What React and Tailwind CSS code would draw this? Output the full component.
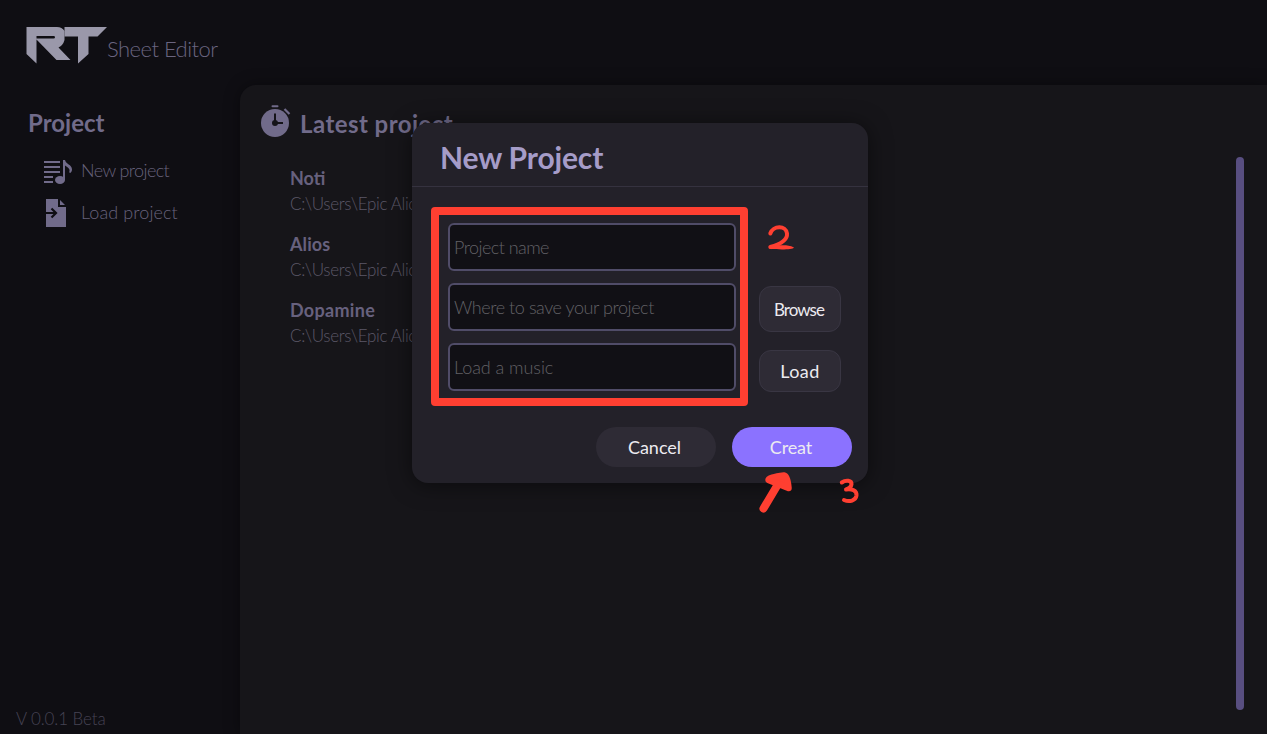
const projects = [
  { name: "Noti", track: "" },
  { name: "Alios", track: "tracking-[0.1px]" },
  { name: "Dopamine", track: "tracking-[0.3px]" },
];

function Logo() {
  return (
    <svg className="h-[38px] w-[82px] shrink-0" viewBox="0 0 82 38" fill="#9a98aa">
      <path
        fillRule="evenodd"
        d="M.5 1H31Q36 1 38.500 5V14Q37 19.500 32.500 21.500L44.500 34H30.500L10.500 13.500V37.500L.5 28ZM10.500 10V12.500H27.500Q29 12.500 29 11.200T27.500 10Z"
      />
      <path d="M38.500 1H81L71.500 10.500H62.500V28L52 37.500V10.500H38.500Z" />
    </svg>
  );
}

function PlaylistIcon() {
  return (
    <svg className="h-7 w-7 shrink-0" viewBox="0 0 28 28" fill="#716b8a">
      <path d="M0 3h16v2H0zM0 8h16v2H0zM0 13h16v2H0zM0 18h9v2H0zM0 23h9v2H0z" />
      <ellipse cx="16" cy="22" rx="5" ry="4" />
      <path d="M19 2h2c.5 4 7 4.500 7 9.500 0 1.500-.6 2.500-1.700 3.500l-1.200-.8c1.600-3-1-4.700-4.100-6.700V22h-2Z" />
    </svg>
  );
}

function FileIcon() {
  return (
    <svg className="h-7 w-7 shrink-0" viewBox="0 0 28 28">
      <path d="M2 0h12v8h8v20H2Z" fill="#716b8a" />
      <path d="M16 1v5h5Z" fill="#716b8a" />
      <path d="M2 14h10M7.500 9.500 12 14l-4.500 4.500" fill="none" stroke="#0f0e13" strokeWidth="2.200" />
    </svg>
  );
}

function StopwatchIcon() {
  return (
    <svg className="h-8 w-[30px] shrink-0" viewBox="0 0 30 32">
      <circle cx="14" cy="18" r="14" fill="#716b8a" />
      <path d="M11.500 1.300h5" stroke="#716b8a" strokeWidth="2" strokeLinecap="round" />
      <path d="m23.500 4 5 5" stroke="#716b8a" strokeWidth="2.200" />
      <path d="M14 8.500V18h8" fill="none" stroke="#151419" strokeWidth="2" />
      <circle cx="14" cy="18" r="3" fill="#151419" />
    </svg>
  );
}

function Field({ placeholder, track }) {
  return (
    <input
      placeholder={placeholder}
      className={
        "h-12 w-72 rounded-md border-2 border-[#504c68] bg-[#111015] px-1 text-[18px] font-light text-white outline-none placeholder:text-[#626166] " +
        track
      }
    />
  );
}

function NewProjectDialog() {
  return (
    <div className="absolute left-[412px] top-[123px] flex h-[360px] w-[456px] flex-col rounded-2xl bg-[#232129] shadow-[0_2px_22px_rgba(0,0,0,0.5)]">
      <h1 className="h-16 shrink-0 border-b border-[#35323f] pl-7 text-[30px] font-bold leading-[68px] tracking-[-0.15px] text-[#a59cc8]">
        New Project
      </h1>
      <div className="flex gap-[23px] pl-9 pt-9">
        <div className="flex flex-col gap-3">
          <Field placeholder="Project name" track="tracking-[-0.55px]" />
          <Field placeholder="Where to save your project" track="tracking-[-0.43px]" />
          <Field placeholder="Load a music" track="tracking-[-0.05px]" />
        </div>
        <div className="flex flex-col pt-[63px]">
          <button className="h-[46px] w-[82px] rounded-xl border border-[#393643] bg-[#2e2b35] pr-0.5 pt-0.5 text-[17px] tracking-[-0.95px] text-[#eceaf0]">
            Browse
          </button>
          <button className="mt-[18px] h-[42px] w-[82px] rounded-xl border border-[#393643] bg-[#2e2b35] text-[18px] leading-none tracking-[0.4px] text-[#eceaf0]">
            Load
          </button>
        </div>
      </div>
      <div className="flex justify-end gap-4 pr-4 pt-[35px]">
        <button className="h-10 w-[120px] rounded-full bg-[#2e2b35] pr-[3px] pt-px text-[18px] text-[#eceaf0]">Cancel</button>
        <button className="h-10 w-[120px] rounded-full bg-[#8b72ff] pr-0.5 pt-px text-[18px] tracking-[-0.1px] text-[#eceaf0]">
          Creat
        </button>
      </div>
    </div>
  );
}

function Annotations() {
  return (
    <>
      <div className="pointer-events-none absolute left-[430.500px] top-[207px] h-[199px] w-[317px] rounded-[4px] border-8 border-[#ff3f31]" />
      <svg className="pointer-events-none absolute left-[764px] top-[222px] h-8 w-8" viewBox="0 0 32 32">
        <path
          d="M6.300 11.500C9 3.500 22 3 23 11.500c.6 6-6 10.500-16.700 13.500"
          fill="none"
          stroke="#ff3f31"
          strokeWidth="4"
          strokeLinecap="round"
        />
        <path d="M7 23.200C14 24.500 22 21.500 30 25.500 29 28 14 27.500 7 27A2 2 0 0 1 7 23.200Z" fill="#ff3f31" />
      </svg>
      <svg
        className="pointer-events-none absolute left-[756px] top-[468px] h-12 w-28"
        viewBox="0 0 112 48"
        fill="none"
        stroke="#ff3f31"
        strokeLinecap="round"
        strokeLinejoin="round"
      >
        <path d="M7.500 40.500 24.500 12" strokeWidth="8" />
        <path d="M12.500 12Q12.500 9.500 28 7.500Q31.500 8 32.500 20Z" fill="#ff3f31" strokeWidth="6.500" />
        <path d="M85.800 14.500c4-2.800 10-2.300 9.700 1.800-.3 2.700-2.500 4.200-5.500 5.200 6-1.200 11 1.500 10.500 6-.7 5-7 7-12.500 4.500" strokeWidth="4" />
      </svg>
    </>
  );
}

export default function App() {
  return (
    <div className="relative flex h-[734px] w-full flex-col overflow-hidden bg-[#0f0e13] font-[Lato,sans-serif]">
      <header className="flex h-[85px] shrink-0 pl-[26px] pt-[26px]">
        <Logo />
        <span className="-ml-px pt-[7px] text-[22px] font-light leading-8 tracking-[-0.52px] text-[#6a6580]">Sheet Editor</span>
      </header>
      <div className="flex min-h-0 flex-1">
        <aside className="flex w-60 shrink-0 flex-col">
          <h2 className="pl-7 pt-[22px] text-[24px] font-bold leading-8 text-[#716b8a]">Project</h2>
          <nav className="flex flex-col gap-[13px] pl-11 pt-[19px] text-[18px] font-light text-[#67627c]">
            <a className="flex h-7 items-center gap-[9px] tracking-[-0.6px]">
              <PlaylistIcon />
              <span className="pb-[3px]">New project</span>
            </a>
            <a className="flex h-7 items-center gap-[9px] tracking-[0.1px]">
              <FileIcon />
              <span className="pb-0.5">Load project</span>
            </a>
          </nav>
          <footer className="mt-auto pb-[3px] pl-4 text-[17px] font-light leading-6 tracking-[-0.1px] text-[#464353]">V 0.0.1 Beta</footer>
        </aside>
        <main className="flex flex-1 justify-between rounded-tl-2xl bg-[#161519] shadow-[0_0_16px_rgba(0,0,0,0.4)]">
          <section>
            <h2 className="flex gap-[9px] pl-[21px] pt-5 text-[24px] font-bold leading-[38px] tracking-[0.45px] text-[#716b8a]">
              <StopwatchIcon />
              <span>Latest project</span>
            </h2>
            <ul className="flex flex-col gap-3.5 pl-[50px] pt-[22px]">
              {projects.map((p) => (
                <li key={p.name} className="h-[52px]">
                  <div className={"text-[18px] font-bold leading-[26px] text-[#67617e] " + p.track}>{p.name}</div>
                  <div className="text-[17px] font-light leading-[26px] tracking-[-0.35px] text-[#5c5868]">{"C:\\Users\\Epic Alios"}</div>
                </li>
              ))}
            </ul>
          </section>
          <div className="mr-[23px] mt-[72px] h-[553px] w-2 rounded-full bg-[#584e80]" />
        </main>
      </div>
      <NewProjectDialog />
      <Annotations />
    </div>
  );
}
